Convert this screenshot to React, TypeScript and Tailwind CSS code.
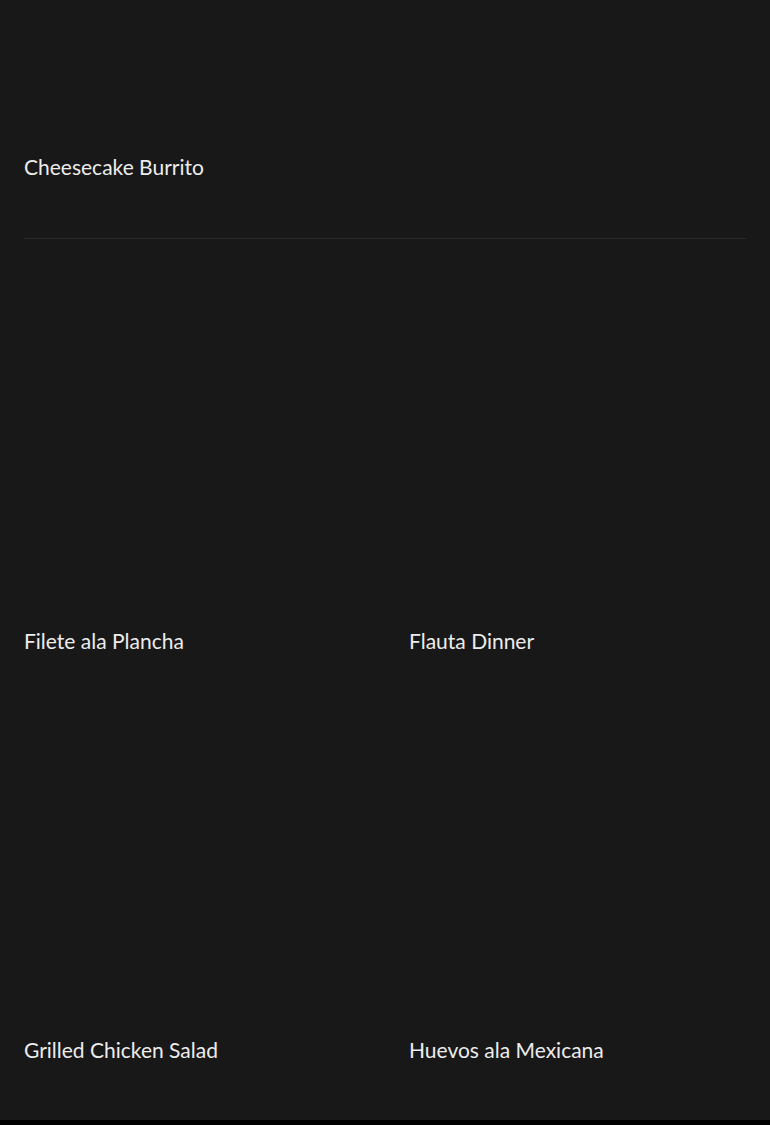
const items = [
  { name: "Filete ala Plancha" },
  { name: "Flauta Dinner" },
  { name: "Grilled Chicken Salad" },
  { name: "Huevos ala Mexicana" },
];

function MenuCard({ name }: { name: string }) {
  return (
    <div className="flex flex-col">
      <div className="h-[325px] w-full bg-[#181818]" />
      <h3 className="h-[28px] text-[21px] leading-[28px] text-[#ececec]">{name}</h3>
      <div className="h-[56px]" />
    </div>
  );
}

export default function App() {
  return (
    <div
      className="min-h-screen bg-[#181818] flex flex-col"
      style={{ fontFamily: "Lato, 'Noto Sans', sans-serif" }}
    >
      <div className="px-6 flex-1">
        {/* Featured */}
        <div className="flex flex-col">
          <div className="h-[153px]" />
          <h3 className="h-[28px] text-[21px] leading-[28px] text-[#ececec]">Cheesecake Burrito</h3>
          <div className="h-[57px]" />
        </div>
        <div className="border-t border-[#2a2a2a]" />

        {/* Menu grid */}
        <div className="grid grid-cols-2 gap-x-12 pt-[63px]">
          {items.map((item) => (
            <MenuCard key={item.name} name={item.name} />
          ))}
        </div>
      </div>
      <div className="h-[5px] bg-black" />
    </div>
  );
}
